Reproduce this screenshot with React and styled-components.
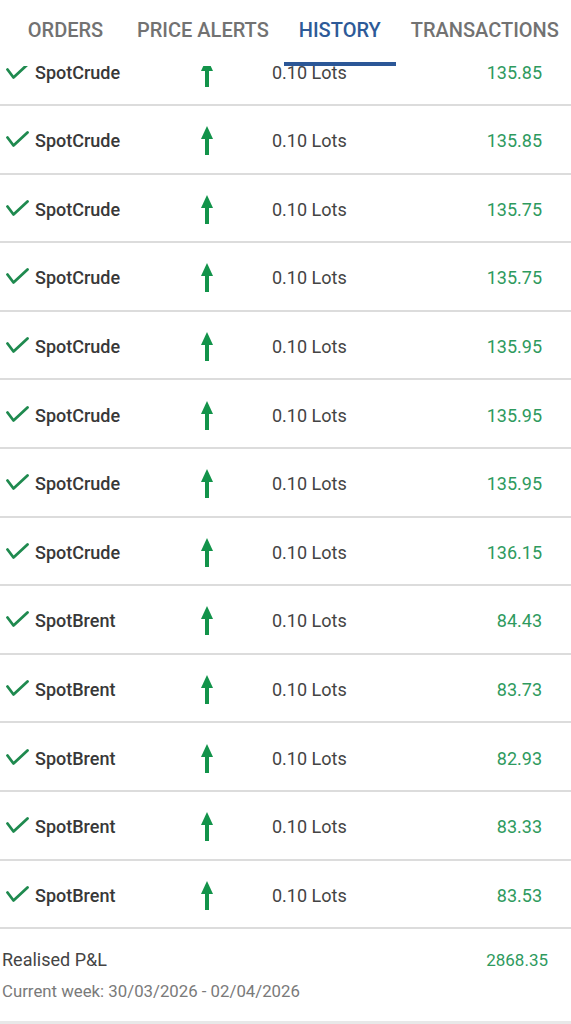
import React from 'react'
import styled, { createGlobalStyle } from 'styled-components'

const trades = [
  { symbol: 'SpotCrude', lots: '0.10 Lots', price: '135.85' },
  { symbol: 'SpotCrude', lots: '0.10 Lots', price: '135.85' },
  { symbol: 'SpotCrude', lots: '0.10 Lots', price: '135.75' },
  { symbol: 'SpotCrude', lots: '0.10 Lots', price: '135.75' },
  { symbol: 'SpotCrude', lots: '0.10 Lots', price: '135.95' },
  { symbol: 'SpotCrude', lots: '0.10 Lots', price: '135.95' },
  { symbol: 'SpotCrude', lots: '0.10 Lots', price: '135.95' },
  { symbol: 'SpotCrude', lots: '0.10 Lots', price: '136.15' },
  { symbol: 'SpotBrent', lots: '0.10 Lots', price: '84.43' },
  { symbol: 'SpotBrent', lots: '0.10 Lots', price: '83.73' },
  { symbol: 'SpotBrent', lots: '0.10 Lots', price: '82.93' },
  { symbol: 'SpotBrent', lots: '0.10 Lots', price: '83.33' },
  { symbol: 'SpotBrent', lots: '0.10 Lots', price: '83.53' },
]

const tabs = [
  { label: 'ORDERS', minWidth: 113 },
  { label: 'PRICE ALERTS' },
  { label: 'HISTORY', active: true },
  { label: 'TRANSACTIONS' },
]

function CheckIcon() {
  return (
    <svg width="23" height="17" viewBox="0 0 23 17">
      <polyline points="1.5,6.5 7.5,14.5 21.5,1.5" fill="none" stroke="#1f8a4f" strokeWidth="2.8" strokeLinecap="round" strokeLinejoin="round" />
    </svg>
  )
}

function UpArrow() {
  return (
    <svg width="12" height="29" viewBox="0 0 12 29">
      <polygon points="6,0 12,13 0,13" fill="#12934a" />
      <rect x="4" y="12" width="4" height="17" fill="#12934a" />
    </svg>
  )
}

function App() {
  return (
    <>
      <GlobalStyle />
      <Page>
        <TabBar>
          {tabs.map((t) => (
            <Tab key={t.label} $active={t.active} $minWidth={t.minWidth}>
              {t.label}
            </Tab>
          ))}
        </TabBar>
        <Viewport>
          <List>
            {trades.map((t, i) => (
              <Row key={i}>
                <CheckCell><CheckIcon /></CheckCell>
                <Symbol>{t.symbol}</Symbol>
                <ArrowCell><UpArrow /></ArrowCell>
                <Lots>{t.lots}</Lots>
                <Price>{t.price}</Price>
              </Row>
            ))}
          </List>
          <Footer>
            <FooterLine>
              <Label>Realised P&amp;L</Label>
              <Total>2868.35</Total>
            </FooterLine>
            <Week>Current week: 30/03/2026 - 02/04/2026</Week>
          </Footer>
        </Viewport>
      </Page>
    </>
  )
}
export default App

const GlobalStyle = createGlobalStyle`
  html, body {
    margin: 0;
    padding: 0;
    background: #fff;
  }
  body {
    font-family: Roboto, "Liberation Sans", sans-serif;
    -webkit-font-smoothing: antialiased;
  }
`

const Page = styled.div`
  width: 571px;
  height: 1024px;
  display: flex;
  flex-direction: column;
  overflow: hidden;
  background: #fff;
`

const TabBar = styled.div`
  height: 66px;
  flex-shrink: 0;
  display: flex;
  padding-left: 9px;
  background: #fff;
  position: relative;
  z-index: 1;
`

const Tab = styled.div`
  box-sizing: border-box;
  height: 66px;
  min-width: ${(p) => (p.$minWidth ? `${p.$minWidth}px` : 'auto')};
  padding: 18px 15px 0;
  display: flex;
  justify-content: center;
  font-size: 20px;
  line-height: 24px;
  font-weight: 500;
  white-space: nowrap;
  color: ${(p) => (p.$active ? '#2d5a98' : '#727272')};
  border-bottom: 4px solid ${(p) => (p.$active ? '#2b5797' : 'transparent')};
`

const Viewport = styled.div`
  flex: 1;
  overflow: hidden;
  display: flex;
  flex-direction: column;
`

const List = styled.div`
  margin-top: -28.6px;
`

const Row = styled.div`
  box-sizing: border-box;
  height: 68.6px;
  padding: 3px 29px 0 6px;
  border-bottom: 2px solid #dcdcdc;
  display: grid;
  grid-template-columns: 29px 160px 24px 1fr auto;
  align-items: center;
`

const CheckCell = styled.div`
  display: flex;
  margin-top: -2px;
`

const Symbol = styled.div`
  font-size: 18px;
  font-weight: 500;
  color: #383838;
`

const ArrowCell = styled.div`
  display: flex;
  justify-content: center;
`

const Lots = styled.div`
  padding-left: 53px;
  font-size: 18px;
  color: #444;
`

const Price = styled.div`
  font-size: 18px;
  color: #2e9a5e;
  text-align: right;
`

const Footer = styled.div`
  flex: 1;
  padding: 19px 23px 0 2px;
  border-bottom: 3px solid #e8e8e8;
`

const FooterLine = styled.div`
  display: flex;
  justify-content: space-between;
  align-items: center;
  line-height: 24px;
`

const Label = styled.span`
  font-size: 18px;
  color: #444;
`

const Total = styled.span`
  font-size: 17px;
  color: #2e9a5e;
`

const Week = styled.div`
  margin-top: 7px;
  font-size: 16.8px;
  line-height: 24px;
  color: #7a7a7a;
`
